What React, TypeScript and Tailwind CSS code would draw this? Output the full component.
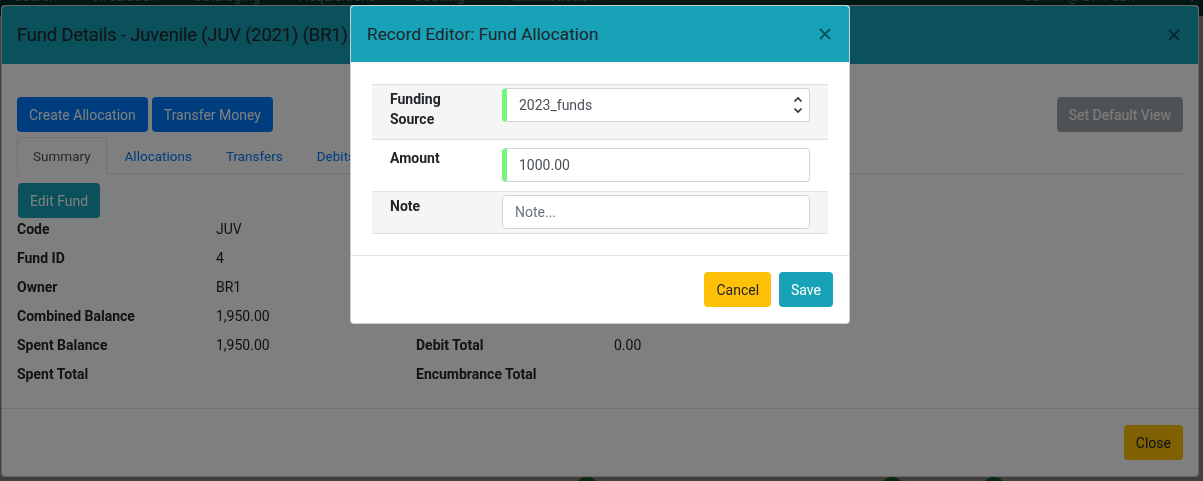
import React from "react";

const CloseX = ({ className }: { className?: string }) => (
  <svg viewBox="0 0 12 12" className={className} fill="none" stroke="currentColor" strokeWidth={1.8}>
    <path d="M1 1l10 10M11 1L1 11" />
  </svg>
);

const fundRows: [string, string, string, string][] = [
  ["Code", "JUV", "Name", "Juvenile"],
  ["Fund ID", "4", "Year", "2021"],
  ["Owner", "BR1", "Currency", "USD"],
  ["Combined Balance", "1,950.00", "Allocation Total", "1,950.00"],
  ["Spent Balance", "1,950.00", "Debit Total", "0.00"],
  ["Spent Total", "", "Encumbrance Total", ""],
];

const navItems: [string, string][] = [
  ["Search", "w-[77px]"],
  ["Circulation", "w-[102px]"],
  ["Cataloging", "w-[106px]"],
  ["Acquisitions", "w-[115px]"],
  ["Booking", "w-[91px]"],
  ["Administration", "w-[130px]"],
];

function FundDetails() {
  return (
    <div className="w-[1198px] rounded border border-black/20 bg-white">
      <div className="flex h-[58px] items-center justify-between rounded-t bg-[#17a2b8] pl-[15px] pr-[18px]">
        <h5 className="text-[18.5px] leading-[30px] tracking-[-0.2px] text-[#212529]">Fund Details - Juvenile (JUV (2021) (BR1)</h5>
        <CloseX className="h-3 w-3 text-black/50" />
      </div>

      <div className="px-[15px] pb-4 pt-[33px] text-sm">
        <div className="flex items-center gap-1">
          <button className="h-[35px] rounded bg-[#007bff] px-3 text-white">Create Allocation</button>
          <button className="h-[35px] rounded bg-[#007bff] px-3 text-white">Transfer Money</button>
          <button className="ml-auto h-[35px] rounded bg-[#6c757d] px-3 text-white opacity-65">Set Default View</button>
        </div>

        <div className="mt-[5px] flex h-[37px] border-b border-[#dee2e6] text-[13.5px]">
          <span className="-mb-px flex h-[37px] items-center rounded-t border border-[#dee2e6] border-b-white bg-white px-[15px] pt-[3px] text-[#495057]">Summary</span>
          <span className="ml-0.5 flex items-center px-4 pt-[3px] text-[#007bff]">Allocations</span>
          <span className="ml-0.5 flex items-center px-4 pt-[3px] text-[#007bff]">Transfers</span>
          <span className="ml-0.5 flex items-center px-4 pt-[3px] text-[#007bff]">Debits</span>
          <span className="ml-0.5 flex items-center px-4 pt-[3px] text-[#007bff]">Encumbrances</span>
        </div>

        <button className="ml-px mt-[9px] h-[35px] rounded bg-[#17a2b8] px-3 text-white">Edit Fund</button>

        <div className="mt-px grid grid-cols-[199px_200px_198px_1fr]">
          {fundRows.map(([l1, v1, l2, v2]) => (
            <React.Fragment key={l1}>
              <div className="h-[29px] font-bold leading-[21px]">{l1}</div>
              <div className="h-[29px] leading-[21px]">{v1}</div>
              <div className="h-[29px] font-bold leading-[21px]">{l2}</div>
              <div className="h-[29px] leading-[21px]">{v2}</div>
            </React.Fragment>
          ))}
        </div>
      </div>

      <div className="-mt-px flex justify-end border-t border-[#dee2e6] px-[15px] py-4 text-sm">
        <button className="h-[35px] rounded bg-[#ffc107] px-3 text-[#212529]">Close</button>
      </div>
    </div>
  );
}

function AllocationEditor() {
  return (
    <div className="w-[500px] rounded border border-black/20 bg-white text-sm">
      <div className="flex h-[56px] items-center justify-between rounded-t bg-[#17a2b8] pl-4 pr-[18px]">
        <h5 className="text-[17.3px] leading-[26px] text-[#212529]">Record Editor: Fund Allocation</h5>
        <CloseX className="h-3 w-3 text-black/50" />
      </div>

      <div className="px-[21px] pb-[21px] pt-[22px]">
        <div className="border-t border-[#dee2e6]">
          <div className="flex h-[55px] items-start border-b border-[#dee2e6] bg-[#f5f5f5] pl-[18px]">
            <label className="w-[112px] pr-5 pt-1 font-bold leading-5">Funding Source</label>
            <div className="mt-[3px] flex h-[34px] w-[308px] items-center justify-between rounded border border-[#ced4da] border-l-[5px] border-l-[#77f47c] bg-white pl-3 pr-[6px] text-[#495057]">
              <span>2023_funds</span>
              <svg viewBox="0 0 10 20" className="h-5 w-[10px] text-[#333]" fill="none" stroke="currentColor" strokeWidth={1.7}>
                <path d="M1.5 6.5L5 3l3.5 3.5M1.5 13.5L5 17l3.5-3.5" />
              </svg>
            </div>
          </div>

          <div className="flex h-[52px] items-start border-b border-[#dee2e6] bg-white pl-[18px]">
            <label className="w-[112px] pt-2 font-bold leading-5">Amount</label>
            <input
              defaultValue="1000.00"
              className="mt-2 h-[34px] w-[308px] rounded border border-[#ced4da] border-l-[5px] border-l-[#77f47c] bg-white pl-3 text-[#495057] outline-none"
            />
          </div>

          <div className="flex h-[42px] items-start border-b border-[#dee2e6] bg-[#f5f5f5] pl-[18px]">
            <label className="w-[112px] pt-1 font-bold leading-5">Note</label>
            <input
              placeholder="Note..."
              className="mt-[3px] h-[34px] w-[308px] rounded border border-[#ced4da] bg-white pl-3 text-[#495057] outline-none placeholder:text-[#6c757d]"
            />
          </div>
        </div>
      </div>

      <div className="flex justify-end gap-2 border-t border-[#dee2e6] py-4 pl-4 pr-4">
        <button className="h-[35px] rounded bg-[#ffc107] px-3 text-[#212529]">Cancel</button>
        <button className="h-[35px] rounded bg-[#17a2b8] px-3 text-white">Save</button>
      </div>
    </div>
  );
}

export default function App() {
  return (
    <div className="relative h-[481px] overflow-hidden bg-white font-[Roboto,sans-serif] text-[#212529]">
      <nav className="-mt-[24px] flex h-10 items-center bg-[#005848] pl-[14px] text-sm text-white/70">
        {navItems.map(([name, w]) => (
          <span key={name} className={w}>
            {name} <span className="text-[10px]">▾</span>
          </span>
        ))}
        <span className="ml-auto pr-[50px]">admin @ BR1-abh</span>
        <span className="pr-1">⋮</span>
      </nav>

      <div className="mt-[461px] flex h-8 items-start pl-[40px] text-sm leading-5">
        <span className="w-[30px]">☐</span>
        <span className="w-[100px] text-[#007bff]">Fund Allocation</span>
        <span className="w-[103px]">JUV</span>
        <span className="w-[103px]">2021</span>
        <span className="w-[103px]">BR1</span>
        <span className="w-[97px]">Juvenile</span>
        <span className="w-[305px]"><span className="inline-block h-5 w-[22px] rounded-full bg-[#28a745]" /></span>
        <span className="w-[102px]"><span className="inline-block h-5 w-[22px] rounded-full bg-[#28a745]" /></span>
        <span className="w-[100px]"><span className="inline-block h-5 w-[22px] rounded-full bg-[#28a745]" /></span>
        <span>1,950.00</span>
      </div>

      <div className="fixed inset-0 bg-black/50" />
      <div className="fixed inset-0 pl-px pt-[5px]">
        <FundDetails />
      </div>
      <div className="fixed inset-0 bg-black/50" />
      <div className="fixed inset-0 pl-[350px] pt-[5px]">
        <AllocationEditor />
      </div>
    </div>
  );
}
